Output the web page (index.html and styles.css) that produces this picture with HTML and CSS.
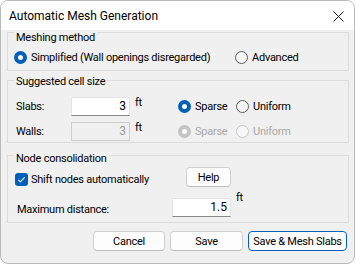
FILE: index.html
```html
<!DOCTYPE html>
<html>
<head>
<meta charset="utf-8">
<link rel="stylesheet" href="styles.css">
</head>
<body>
<div class="window">
  <div class="titlebar">
    <span class="title">Automatic Mesh Generation</span>
    <svg class="close" width="11" height="11" viewBox="0 0 11 11"><path d="M0.5 0.5 L10.5 10.5 M10.5 0.5 L0.5 10.5" stroke="#1a1a1a" stroke-width="1" fill="none"/></svg>
  </div>
  <div class="content">
    <div class="group g1">
      <div class="legend">Meshing method</div>
      <div class="row method">
        <div class="opt opt-simple"><span class="radio on"></span><span>Simplified (Wall openings disregarded)</span></div>
        <div class="opt"><span class="radio"></span><span>Advanced</span></div>
      </div>
    </div>
    <div class="group g2">
      <div class="legend">Suggested cell size</div>
      <div class="row size slabs">
        <span class="lbl">Slabs:</span>
        <div class="field"><span class="input">3</span><span class="unit">ft</span></div>
        <div class="opt opt-sparse"><span class="radio on"></span><span>Sparse</span></div>
        <div class="opt"><span class="radio"></span><span>Uniform</span></div>
      </div>
      <div class="row size walls">
        <span class="lbl">Walls:</span>
        <div class="field"><span class="input disabled">3</span><span class="unit">ft</span></div>
        <div class="opt opt-sparse dis"><span class="radio on dis"></span><span>Sparse</span></div>
        <div class="opt dis"><span class="radio dis"></span><span>Uniform</span></div>
      </div>
    </div>
    <div class="group g3">
      <div class="legend">Node consolidation</div>
      <div class="row shift">
        <div class="opt opt-shift"><span class="check"><svg width="13" height="13" viewBox="0 0 13 13"><path d="M3.3 6.8 L5.4 8.8 L9.7 4.3" stroke="#fff" stroke-width="1.1" fill="none"/></svg></span><span>Shift nodes automatically</span></div>
        <span class="btn help">Help</span>
      </div>
      <div class="row maxd">
        <span class="lbl lbl-max">Maximum distance:</span>
        <div class="field"><span class="input">1.5</span><span class="unit">ft</span></div>
      </div>
    </div>
    <div class="buttons">
      <span class="btn cancel">Cancel</span>
      <span class="btn save">Save</span>
      <span class="btn primary">Save &amp; Mesh Slabs</span>
    </div>
  </div>
</div>
</body>
</html>
```
FILE: styles.css
```css
html, body {
  margin: 0;
  padding: 0;
  background: #ffffff;
}
body {
  font-family: Roboto, "Liberation Sans", Arial, sans-serif;
  font-size: 11px;
  letter-spacing: -0.25px;
  color: #000;
}
.window {
  box-sizing: border-box;
  width: 355px;
  height: 264px;
  border: 1px solid #b9b9b9;
  border-radius: 8px;
  overflow: hidden;
  background: #f0f0f0;
}
.titlebar {
  height: 29px;
  background: #ffffff;
  display: flex;
  align-items: center;
  justify-content: space-between;
  padding: 0 10px 0 8px;
}
.title {
  font-size: 12px;
  letter-spacing: 0;
  line-height: 15px;
  margin-top: 1px;
}
.close {
  display: block;
  margin-top: 2px;
}
.content {
  padding: 2px 5px 0 6px;
}
.group {
  border: 1px solid #dcdcdc;
  box-sizing: border-box;
}
.legend {
  display: block;
  width: fit-content;
  background: #f0f0f0;
  line-height: 15px;
  padding: 0 2px;
  margin-left: 6px;
  white-space: nowrap;
}
.g1 { height: 39px; }
.g1 .legend { margin-top: -3px; }
.g2 { height: 63px; margin-top: 9px; }
.g2 .legend { margin-top: -7px; }
.g3 { height: 68px; margin-top: 12px; }
.g3 .legend { margin-top: -5px; }

.row {
  display: flex;
  align-items: center;
}
.opt {
  display: flex;
  align-items: center;
  line-height: 15px;
  white-space: nowrap;
}
.radio {
  box-sizing: border-box;
  width: 13px;
  height: 13px;
  border-radius: 50%;
  border: 1px solid #5c5c5c;
  background: #f6f6f6;
  margin-right: 4px;
  flex: none;
}
.radio.on {
  border: 4px solid #005fb8;
  background: #ffffff;
}
.radio.dis {
  border-color: #c6c6c6;
  background: #f7f7f7;
}
.radio.on.dis {
  border: 4px solid #c4c4c4;
  background: #ffffff;
}
.dis { color: #a8a8a8; }

.method {
  margin-top: 5px;
  padding-left: 6px;
  height: 15px;
}
.opt-simple { width: 221px; }

.size { padding-left: 8px; height: 19px; }
.slabs { margin-top: 8px; }
.walls { margin-top: 6px; }
.lbl { width: 55px; white-space: nowrap; }
.field {
  display: flex;
  align-items: flex-start;
  width: 107px;
  height: 19px;
  flex: none;
}
.input {
  box-sizing: border-box;
  width: 59px;
  height: 19px;
  background: #ffffff;
  border: 1px solid #e4e4e4;
  border-bottom-color: #8a8a8a;
  text-align: right;
  padding-right: 3px;
  line-height: 17px;
  font-size: 12px;
  letter-spacing: 0;
  flex: none;
}
.input.disabled {
  background: #f0f0f0;
  border: 1px solid #cdcdcd;
  color: #9e9e9e;
}
.unit {
  margin-left: 5px;
  line-height: 12px;
  font-size: 11px;
}
.opt-sparse { width: 58px; }

.shift {
  margin-top: 1px;
  padding-left: 7px;
  height: 20px;
  align-items: flex-start;
}
.opt-shift { width: 171px; margin-top: 5px; }
.check {
  width: 13px;
  height: 13px;
  border-radius: 3px;
  background: #005fb8;
  margin-right: 3px;
  flex: none;
}
.check svg { display: block; }
.btn {
  box-sizing: border-box;
  display: flex;
  align-items: center;
  justify-content: center;
  height: 20px;
  background: #fdfdfd;
  border: 1px solid #d0d0d0;
  border-bottom-color: #bdbdbd;
  border-radius: 4px;
  white-space: nowrap;
  flex: none;
}
.help { width: 45px; }
.maxd {
  margin-top: 11px;
  padding-left: 9px;
  height: 19px;
  align-items: flex-start;
}
.lbl-max { width: 155px; margin-top: 4px; line-height: 15px; }
.maxd .unit { margin-top: -6px; }

.buttons {
  display: flex;
  justify-content: flex-end;
  gap: 5px;
  margin-top: 8px;
  padding-right: 2px;
}
.cancel { width: 72px; }
.save { width: 73px; }
.primary {
  width: 99px;
  border: 1px solid #005fb8;
}
```
